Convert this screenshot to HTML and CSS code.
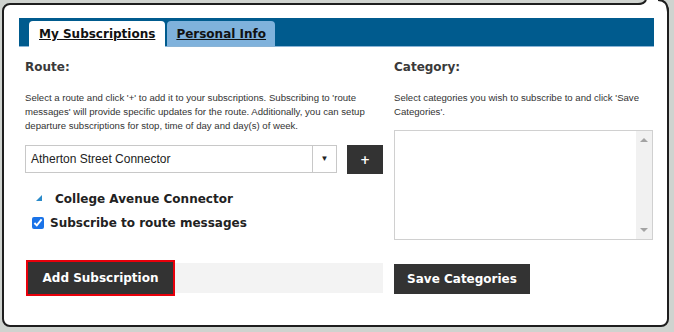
FILE: index.html
```html
<!DOCTYPE html>
<html lang="en">
<head>
  <meta charset="UTF-8" />
  <title>Subscriptions</title>
  <link rel="stylesheet" href="styles.css">
</head>
<body>
  <div class="popup">
    <svg class="nub" width="36" height="16" viewBox="0 0 36 16">
      <path d="M2,5 Q10,5 12,0 L24,0 Q33,0 33,12 L33,16 L2,16 Z" fill="#fff"/>
      <path d="M0,4 L4,4 Q10,4 12,0 M24,0 Q34,0 34,12 L34,16" fill="none" stroke="#1e1e1e" stroke-width="2"/>
    </svg>
    <div class="tabbar">
      <a class="tab active">My Subscriptions</a>
      <a class="tab">Personal Info</a>
    </div>

    <div class="columns">
      <div class="col left">
        <h3>Route:</h3>
        <p class="desc">Select a route and click '+' to add it to your subscriptions. Subscribing to 'route messages' will provide specific updates for the route. Additionally, you can setup departure subscriptions for stop, time of day and day(s) of week.</p>

        <div class="route-row">
          <div class="select">
            <span class="select-text">Atherton Street Connector</span>
            <span class="select-arrow">&#9660;</span>
          </div>
          <button class="btn plus">+</button>
        </div>

        <div class="route-item">
          <svg class="tri" width="6" height="6" viewBox="0 0 6 6"><polygon points="6,0 6,6 0,6" fill="#2a8ac9"/></svg>
          <span>College Avenue Connector</span>
        </div>
        <label class="check">
          <input type="checkbox" checked>
          <span>Subscribe to route messages</span>
        </label>

        <div class="action-row">
          <button class="btn add">Add Subscription</button>
          <div class="spacer"></div>
        </div>
      </div>

      <div class="col right">
        <h3>Category:</h3>
        <p class="desc">Select categories you wish to subscribe to and click 'Save Categories'.</p>

        <div class="listbox">
          <div class="list-area"></div>
          <div class="scroll">
            <span class="arr up"></span>
            <span class="arr down"></span>
          </div>
        </div>

        <button class="btn save">Save Categories</button>
      </div>
    </div>
  </div>
</body>
</html>
```

FILE: styles.css
```css
body {
  margin: 0;
  background: #cfd3cf;
  font-family: "Liberation Sans", Arial, sans-serif;
  color: #222;
}

.popup {
  position: relative;
  box-sizing: border-box;
  width: 667px;
  height: 324px;
  margin: 3px 0 0 2px;
  background: #fff;
  border: 2px solid #1e1e1e;
  border-radius: 8px;
  padding: 13px 13px 0 15px;
}

/* little pointer on the top right corner */
.nub {
  position: absolute;
  top: -5px;
  right: -3px;
}

.tabbar {
  display: flex;
  align-items: flex-end;
  gap: 2px;
  height: 29px;
  padding-left: 10px;
  background: #005b8e;
  border-bottom: 1px solid #8ab4d6;
  box-sizing: border-box;
}

.tab {
  display: block;
  height: 25px;
  line-height: 26px;
  padding: 0 10px;
  border-radius: 4px 4px 0 0;
  font-family: "DejaVu Sans", Verdana, sans-serif;
  font-size: 12px;
  font-weight: bold;
  color: #111;
  text-decoration: underline;
  background: #7fb2dc;
}

.tab + .tab {
  padding: 0 9px;
}

.tab.active {
  background: #fff;
  height: 26px;
  margin-bottom: -1px;
}

.columns {
  display: grid;
  grid-template-columns: 358px 260px;
  gap: 11px;
  padding-left: 6px;
}

.col {
  display: flex;
  flex-direction: column;
}

h3 {
  margin: 13px 0 0;
  font-family: "DejaVu Sans", Verdana, sans-serif;
  font-size: 12px;
  color: #3a3a3a;
  line-height: 14px;
}

.desc {
  margin: 17px 0 0;
  font-size: 9.6px;
  line-height: 14px;
  color: #333;
}

.route-row {
  display: flex;
  align-items: flex-start;
  gap: 10px;
  margin-top: 12px;
}

.select {
  display: flex;
  box-sizing: border-box;
  width: 312px;
  height: 28px;
  border: 1px solid #c8c8c8;
  background: #fff;
}

.select-text {
  flex: 1;
  padding-left: 5px;
  line-height: 26px;
  font-size: 12px;
  color: #222;
}

.select-arrow {
  width: 23px;
  border-left: 1px solid #c8c8c8;
  text-align: center;
  line-height: 26px;
  font-size: 8px;
  color: #222;
}

.btn {
  border: none;
  background: #333;
  color: #fff;
  font-family: "DejaVu Sans", Verdana, sans-serif;
  font-weight: bold;
  font-size: 12px;
  cursor: pointer;
  padding: 0;
}

.plus {
  width: 36px;
  height: 29px;
  font-size: 12px;
}

.route-item {
  display: flex;
  align-items: center;
  gap: 13px;
  margin: 18px 0 0 11px;
  font-family: "DejaVu Sans", Verdana, sans-serif;
  font-size: 12px;
  font-weight: bold;
  color: #222;
}

.tri {
  margin-top: -2px;
}

.check {
  display: flex;
  align-items: center;
  gap: 6px;
  margin: 10px 0 0 7px;
  font-family: "DejaVu Sans", Verdana, sans-serif;
  font-size: 12px;
  font-weight: bold;
  color: #222;
}

.check input {
  margin: 0;
  width: 12px;
  height: 12px;
  accent-color: #1a73e8;
}

.action-row {
  display: flex;
  align-items: center;
  margin-top: 30px;
  margin-left: 1px;
}

.add {
  box-sizing: border-box;
  width: 149px;
  height: 36px;
  border: 2px solid #e8000b;
}

.spacer {
  width: 208px;
  height: 30px;
  background: #f3f3f3;
}

.listbox {
  display: flex;
  box-sizing: border-box;
  width: 259px;
  height: 110px;
  margin-top: 11px;
  border: 1px solid #d0d0d0;
}

.list-area {
  flex: 1;
}

.scroll {
  position: relative;
  width: 16px;
  background: #f1f1f1;
}

.arr {
  position: absolute;
  left: 4px;
  width: 0;
  height: 0;
  border-left: 4px solid transparent;
  border-right: 4px solid transparent;
}

.arr.up {
  top: 7px;
  border-bottom: 4px solid #a3a3a3;
}

.arr.down {
  bottom: 7px;
  border-top: 4px solid #a3a3a3;
}

.save {
  width: 136px;
  height: 30px;
  margin-top: 24px;
}
```
